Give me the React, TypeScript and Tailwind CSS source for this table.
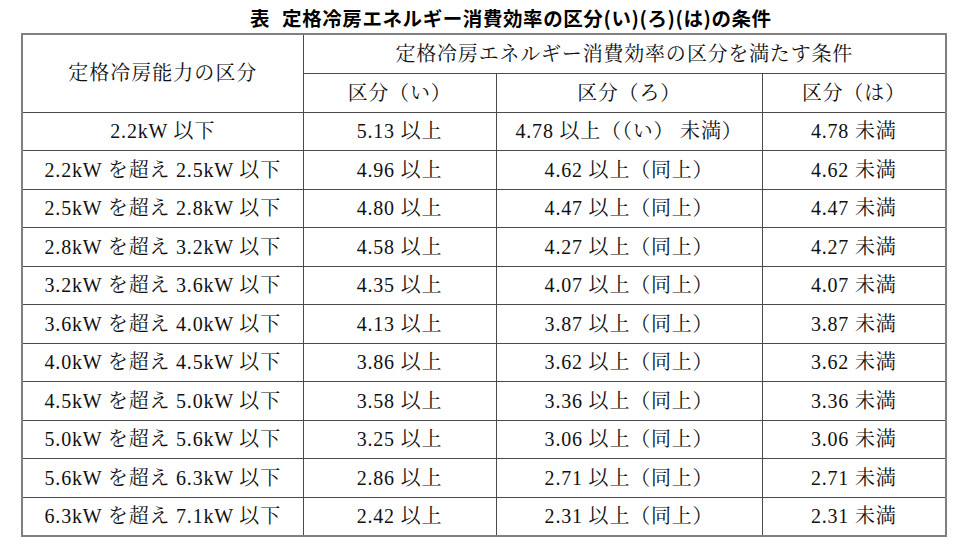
import React from 'react';

const rows: [string, string, string, string][] = [
  ['2.2kW 以下', '5.13 以上', '4.78 以上（（い） 未満）', '4.78 未満'],
  ['2.2kW を超え 2.5kW 以下', '4.96 以上', '4.62 以上（同上）', '4.62 未満'],
  ['2.5kW を超え 2.8kW 以下', '4.80 以上', '4.47 以上（同上）', '4.47 未満'],
  ['2.8kW を超え 3.2kW 以下', '4.58 以上', '4.27 以上（同上）', '4.27 未満'],
  ['3.2kW を超え 3.6kW 以下', '4.35 以上', '4.07 以上（同上）', '4.07 未満'],
  ['3.6kW を超え 4.0kW 以下', '4.13 以上', '3.87 以上（同上）', '3.87 未満'],
  ['4.0kW を超え 4.5kW 以下', '3.86 以上', '3.62 以上（同上）', '3.62 未満'],
  ['4.5kW を超え 5.0kW 以下', '3.58 以上', '3.36 以上（同上）', '3.36 未満'],
  ['5.0kW を超え 5.6kW 以下', '3.25 以上', '3.06 以上（同上）', '3.06 未満'],
  ['5.6kW を超え 6.3kW 以下', '2.86 以上', '2.71 以上（同上）', '2.71 未満'],
  ['6.3kW を超え 7.1kW 以下', '2.42 以上', '2.31 以上（同上）', '2.31 未満'],
];

const cell = 'border border-[#4a4a4a] text-center align-middle p-0 font-normal';

export default function App() {
  return (
    <div
      className="w-[964px] h-[556px] bg-white text-[#111] overflow-hidden"
      style={{ fontFamily: '"Liberation Serif", "Noto Serif CJK JP", "Noto Sans CJK JP", serif' }}
    >
      {/* Title */}
      <div
        className="h-[33px] pl-[250px] pt-[5px] flex items-start gap-[12px] text-[19.5px] font-bold leading-[26px] tracking-[0.03em] text-black"
        style={{ fontFamily: '"Noto Sans CJK JP", sans-serif' }}
      >
        <span>表</span>
        <span>定格冷房エネルギー消費効率の区分(い)(ろ)(は)の条件</span>
      </div>

      {/* Table */}
      <table className="ml-[21px] w-[924px] table-fixed border-collapse border-2 border-[#808080] text-[20px] leading-none tracking-[0.04em]">
        <colgroup>
          <col className="w-[281px]" />
          <col className="w-[193px]" />
          <col className="w-[266px]" />
          <col className="w-[184px]" />
        </colgroup>
        <thead>
          <tr className="h-[39px]">
            <th rowSpan={2} className={`${cell} tracking-[0.05em]`}>定格冷房能力の区分</th>
            <th colSpan={3} className={`${cell} tracking-[0.04em]`}>定格冷房エネルギー消費効率の区分を満たす条件</th>
          </tr>
          <tr className="h-[39px]">
            <th className={cell}>区分（い）</th>
            <th className={cell}>区分（ろ）</th>
            <th className={cell}>区分（は）</th>
          </tr>
        </thead>
        <tbody>
          {rows.map((r, i) => (
            <tr key={i} className="h-[38.5px]">
              <td className={cell}>{r[0]}</td>
              <td className={cell}>{r[1]}</td>
              <td className={cell}>{r[2]}</td>
              <td className={cell}>{r[3]}</td>
            </tr>
          ))}
        </tbody>
      </table>
    </div>
  );
}
